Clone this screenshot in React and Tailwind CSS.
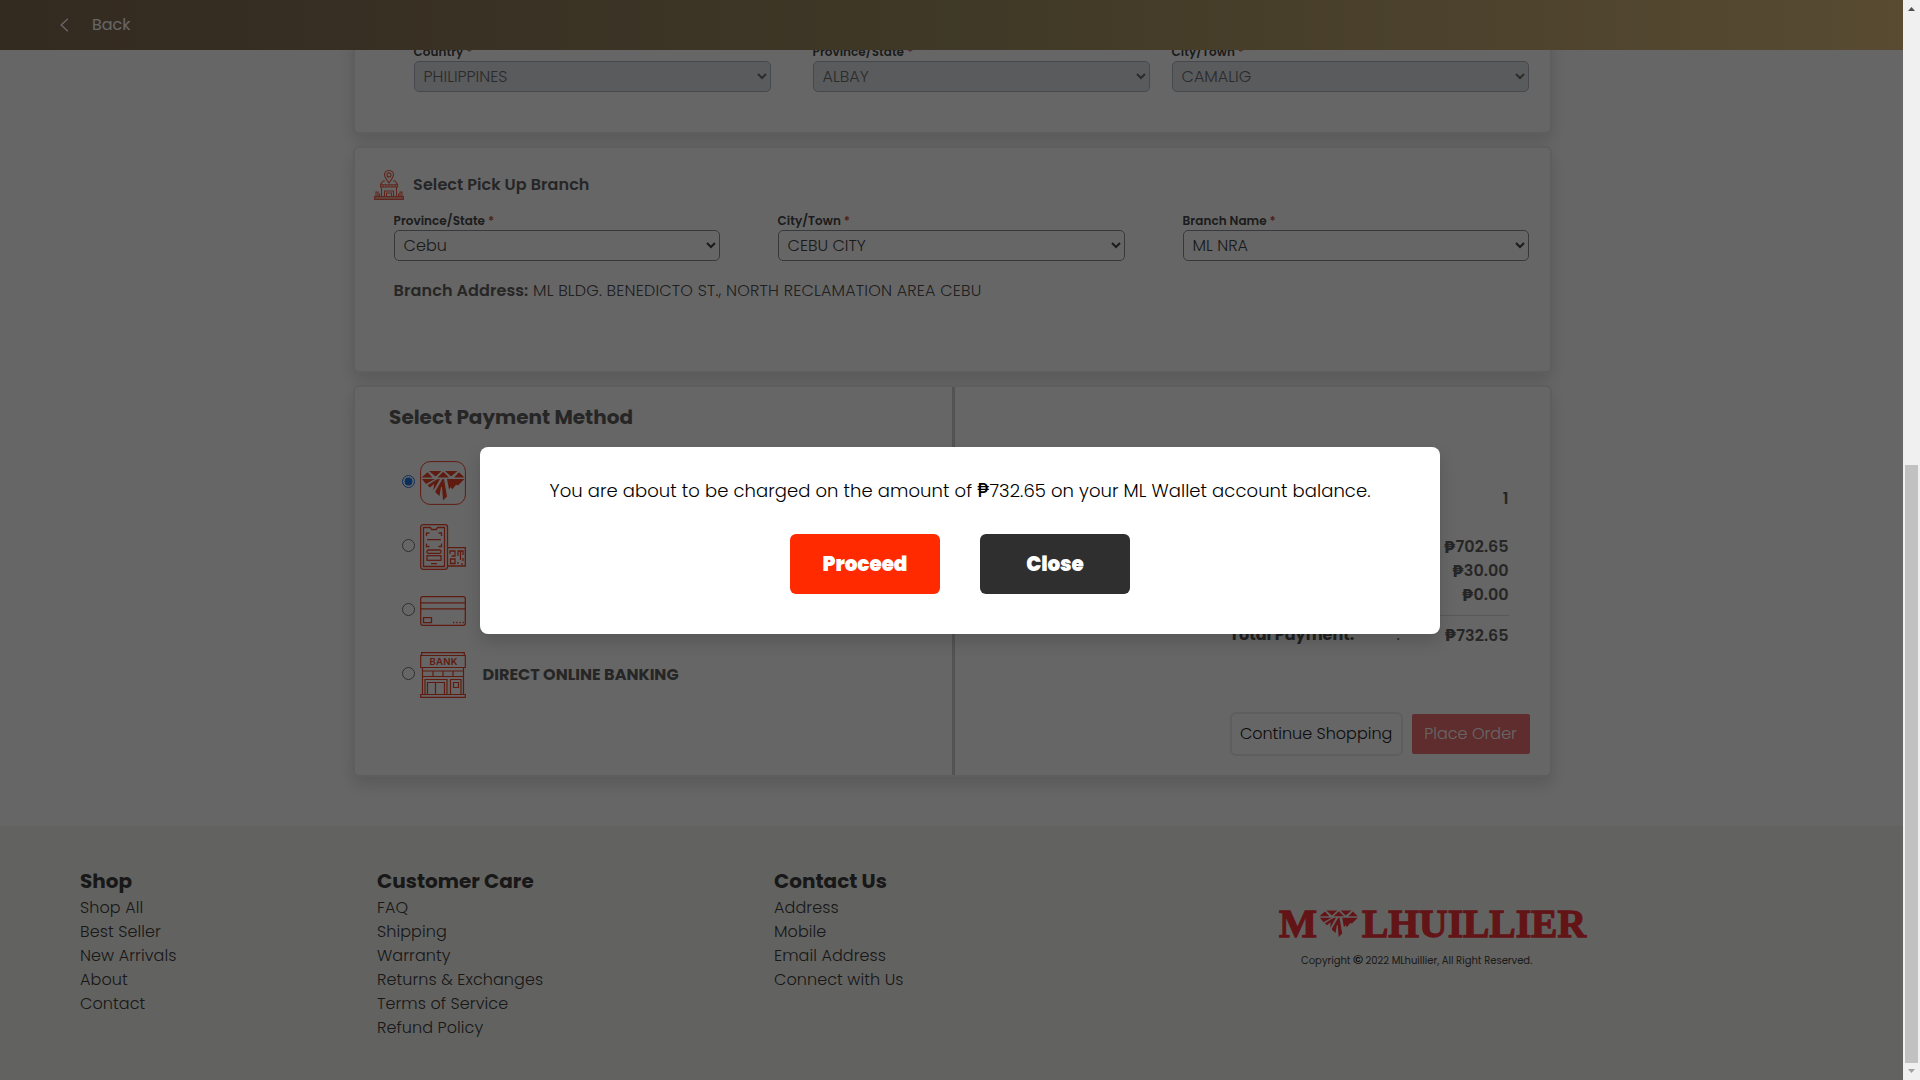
import React from "react";

const Peso = ({ bold }) => (
  <span className={bold ? "font-[Inter] font-extrabold" : "font-[Inter] font-medium"}>₱</span>
);

function Select({ value, disabled, className }) {
  return (
    <select
      disabled={disabled}
      defaultValue={value}
      className={
        "block h-[31px] rounded-[5px] border pr-[6px] pl-[5px] text-base leading-6 font-light " +
        (disabled ? "border-[#adb5bd] bg-[#dfe3e7] text-[#6d6d6d] " : "border-[#8a9097] bg-white text-[#444] ") +
        className
      }
    >
      <option>{value}</option>
    </select>
  );
}

function Field({ label, value, disabled, width }) {
  return (
    <div className={width}>
      <div className="h-[18px] text-xs leading-[18px] font-semibold tracking-[0.04px] text-[#484848]">
        {label} <span className="text-[#b85050]">*</span>
      </div>
      <Select value={value} disabled={disabled} className="w-full" />
    </div>
  );
}

const CARD = "rounded-md border-2 border-[#ebebeb] bg-white shadow-[0_8px_16px_rgba(0,0,0,0.13)]";

const Gem = () => (
  <>
    <path d="M7.500 0H20L14 5.500ZM23.500 0H36L29.500 5.500ZM0 6.500 6 1.200 11 6.500ZM16 6.500 21.700.8 27.500 6.500ZM32.500 6.500 37.500 1.200 43 6.500Z" />
    <path d="M.5 8H13.500L4.500 13Z" />
    <path d="M15.500 8.300 6 14.200 8.500 16.500 12.500 13 12 19.500 18.500 8Z" />
    <path d="M21 8 14 20 14 21.500 18 25 19.500 16 20.500 16 21.500 29.500 25.500 25.500 22.500 8Z" />
    <path d="M25.500 8H43L36.500 14.500 34.500 13.800 31 18.300 29 16.300 27.500 18.500Z" />
  </>
);

const WalletIcon = () => (
  <svg width="46" height="44" viewBox="0 0 46 44" fill="none" className="text-[#f0452a]">
    <rect x=".6" y=".6" width="44.800" height="42.800" rx="9.500" stroke="currentColor" />
    <g fill="currentColor" transform="translate(1.500 10)">
      <Gem />
    </g>
  </svg>
);

const QrIcon = () => (
  <svg width="46" height="46" viewBox="0 0 46 46" fill="none" stroke="#f0452a" strokeWidth="1.300">
    <rect x=".7" y=".7" width="26.800" height="44.600" rx="2.500" />
    <path d="M3.500 3.500H10.500L11.500 5.500H16.500L17.500 3.500H24.500V42.500H3.500Z" />
    <path d="M6.500 12V9H9.500M18.500 9H21.500V12M6.500 19.500V22.500H9.500M18.500 22.500H21.500V19.500M7 15.700H21M11 39.700H17" />
    <rect x="7" y="26" width="14" height="3.400" rx="1.500" />
    <rect x="7" y="31.700" width="14" height="4.600" />
    <path d="M27.500 23.700H45.300V42H27.500M30 30V27H35V32H31.500M38 32V27H43V31M40.500 27V36M43 34V37M30.500 35H35V39.500H30.500ZM38 38V40M42 39V41" />
  </svg>
);

const CardIcon = () => (
  <svg width="46" height="30" viewBox="0 0 46 30" fill="none" stroke="#f0452a" strokeWidth="1.300">
    <rect x=".7" y=".7" width="44.600" height="28.600" rx="2" />
    <path d="M.7 6.800H45.300M.7 12.800H45.300M3.500 21.700H11.500V26.700H3.500Z" />
    <path d="M33 26.500H44" strokeDasharray="1.400 1.800" strokeWidth="1.600" />
  </svg>
);

const BankIcon = () => (
  <svg width="46" height="46" viewBox="0 0 46 46" fill="none" stroke="#f0452a" strokeWidth="1.200">
    <path d="M1.700 3.500V.7H44.300V3.500M.7 3.500H45.300V15.500H.7ZM.7 42.500H45.300V45.300H.7ZM2.500 15.500V42.500M43.500 15.500V42.500M3 19H43M3 24.500H43M13 19V24.500M23 19V24.500M33 19V24.500" />
    <path d="M5 42.500V27.500H27V42.500M7.500 42.500V30.500H24.500V42.500M15.500 30.500V42.500M30.500 42.500V27.500H41V42.500M33.500 30.500H38.500V35.500H33.500Z" />
    <text x="9.500" y="13" fontFamily="Inter, sans-serif" fontWeight="600" fontSize="9.500" textLength="28" lengthAdjust="spacing" fill="#f0452a" stroke="none">BANK</text>
  </svg>
);

const BranchIcon = () => (
  <svg width="30" height="30" viewBox="0 0 30 30" fill="none" stroke="#f0604a" strokeWidth="1.100">
    <path d="M15 13C12 8.500 10.500 7 10.500 4.800A4.500 4.300 0 0 1 19.500 4.800C19.500 7 18 8.500 15 13Z" />
    <circle cx="15" cy="4.900" r="2" />
    <path d="M11 11H9L6.500 14.500V17H23.500V14.500L21 11H19M6.500 14.800H23.500M9 15V17M12 15V17M15 15V17M18 15V17M21 15V17M7.500 17V26M22.500 17V26M10.500 26V21H19.500V26M12.500 26V23H17.500V26M4 26V22H2V26M26 26V22H28V26M5.500 26V23.500M24.500 26V23.500" />
    <path d="M.6 26.500H29.400V29.400H.6Z" fill="#f0604a" fillOpacity=".5" />
  </svg>
);

function Method({ icon, label, checked }) {
  return (
    <div className="flex h-16 items-center">
      <input type="radio" name="method" defaultChecked={checked} className="mr-[5px] mb-1 size-[13px] accent-[#1a73e8]" />
      {icon}
      <span className="ml-[17px] font-bold text-[#606060]">{label}</span>
    </div>
  );
}

const LINKS = [
  ["w-[297px]", "Shop", ["Shop All", "Best Seller", "New Arrivals", "About", "Contact"]],
  ["w-[397px]", "Customer Care", ["FAQ", "Shipping", "Warranty", "Returns & Exchanges", "Terms of Service", "Refund Policy"]],
  ["w-[504px]", "Contact Us", ["Address", "Mobile", "Email Address", "Connect with Us"]],
];

function Logo() {
  return (
    <svg width="310" height="32" viewBox="0 0 310 32" fill="#f8333a" stroke="#f8333a" className="overflow-visible">
      <text x="1" y="28.500" fontFamily="'Liberation Serif', serif" fontWeight="700" fontSize="41" strokeWidth="1.300" textLength="38" lengthAdjust="spacingAndGlyphs">M</text>
      <g transform="translate(41.500 2.500) scale(.89 .9)" stroke="none">
        <Gem />
      </g>
      <text x="84" y="28.500" fontFamily="'Liberation Serif', serif" fontWeight="700" fontSize="41" strokeWidth="1.300" textLength="224" lengthAdjust="spacingAndGlyphs">LHUILLIER</text>
    </svg>
  );
}

function Footer() {
  return (
    <footer className="flex h-[254px] bg-[#f5f5f0] pt-10 pl-20 text-[#3c3c3c]">
      {LINKS.map(([width, title, items]) => (
        <div key={title} className={width}>
          <h3 className="text-xl leading-[30px] font-bold">{title}</h3>
          <ul className="leading-6 font-light tracking-[0.08px]">
            {items.map((item) => (
              <li key={item}>{item}</li>
            ))}
          </ul>
        </div>
      ))}
      <div className="pt-[42px]">
        <Logo />
        <p className="mt-[13px] ml-[23px] text-[10px] leading-[15px] font-normal text-[#444]">
          Copyright <span className="font-['Liberation_Sans'] text-[13px] leading-3 font-bold text-black">©</span> 2022 MLhuillier, All Right Reserved.
        </p>
      </div>
    </footer>
  );
}

function Summary() {
  const row = "flex h-6 justify-end";
  return (
    <section className="flex flex-1 flex-col pr-[41px] pl-[275px]">
      <div className="mt-[100px] leading-6 font-semibold text-[#606060]">
        <div className={row}>1</div>
        <div className="mt-6">
          <div className={row}><Peso bold />702.65</div>
          <div className={row}><Peso bold />30.00</div>
          <div className={row}><Peso bold />0.00</div>
        </div>
        <div className="mt-2 mb-[7px] h-px bg-[#dcdcdc]" />
        <div className="flex h-6">
          <span className="w-[167px] font-bold text-[#505050]">Total Payment:</span>
          <span className="font-normal">:</span>
          <span className="ml-auto"><Peso bold />732.65</span>
        </div>
      </div>
      <div className="mt-[65px] -mr-[21px] flex items-center justify-between">
        <button className="h-11 w-[173px] rounded-md border-2 border-[#ebebeb] font-light text-[#222]">Continue Shopping</button>
        <button className="h-10 w-[118px] rounded-[2px] bg-[#ed7070] font-light text-white">Place Order</button>
      </div>
    </section>
  );
}

export default function App() {
  return (
    <div className="flex h-[1080px] w-[1920px] overflow-hidden bg-white font-[Poppins,sans-serif] text-base">
      <div className="relative flex w-[1903px] flex-col">
        <header className="z-10 flex h-[50px] shrink-0 items-center bg-linear-to-r from-[#806952] via-[#9f8e61] to-[#dcbb7d] pl-[60px] text-white">
          <svg width="9" height="14" viewBox="0 0 9 14" fill="none" stroke="currentColor" strokeWidth="1.400">
            <path d="M7.800.7 1.200 7 7.800 13.300" />
          </svg>
          <span className="ml-[23px]">Back</span>
        </header>

        <main className="ml-[352.600px] -mt-5 flex w-[1199px] flex-col gap-3">
          <section className={CARD + " flex h-[104px] pt-[11px] pl-[59px]"}>
            <Field disabled label="Country" value="PHILIPPINES" width="mr-[42px] w-[357px]" />
            <Field disabled label="Province/State" value="ALBAY" width="mr-[22px] w-[337px]" />
            <Field disabled label="City/Town" value="CAMALIG" width="w-[357px]" />
          </section>

          <section className={CARD + " h-[227px]"}>
            <div className="mt-[22px] ml-[19px] flex h-[30px] items-center gap-[9.500px]">
              <BranchIcon />
              <h2 className="font-semibold tracking-[0.08px] text-[#606060]">Select Pick Up Branch</h2>
            </div>
            <div className="mt-[12px] ml-[39px] flex">
              <Field label="Province/State" value="Cebu" width="mr-[58px] w-[326px]" />
              <Field label="City/Town" value="CEBU CITY" width="mr-[58px] w-[347px]" />
              <Field label="Branch Name" value="ML NRA" width="w-[346px]" />
            </div>
            <p className="mt-[18px] ml-[39px] leading-6 font-light tracking-[0.18px] text-[#505050]">
              <b className="font-semibold tracking-[0.1px] text-[#606060]">Branch Address:</b> ML BLDG. BENEDICTO ST., NORTH RECLAMATION AREA CEBU
            </p>
          </section>

          <section className={CARD + " flex h-[392px]"}>
            <div className="w-[600px] border-r-[3px] border-[#cfcfcf]">
              <h2 className="mt-[15px] ml-[34.500px] text-xl leading-[30px] font-bold text-[#606060]">Select Payment Method</h2>
              <div className="mt-[19px] ml-[47px]">
                <Method icon={<WalletIcon />} checked />
                <Method icon={<QrIcon />} />
                <Method icon={<CardIcon />} />
                <Method icon={<BankIcon />} label="DIRECT ONLINE BANKING" />
              </div>
            </div>
            <Summary />
          </section>
        </main>

        <div className="mt-[49px]">
          <Footer />
        </div>

        <div className="absolute inset-0 z-20 bg-black/60 pt-[447px] pl-[480px]">
          <div className="flex h-[187px] w-[960px] flex-col items-center rounded-lg bg-white pt-[30px] shadow-[0_8px_16px_rgba(0,0,0,0.15)]">
            <p className="text-lg leading-[27px] font-light tracking-[0.07px] text-black">
              You are about to be charged on the amount of <Peso />732.65 on your ML Wallet account balance.
            </p>
            <div className="mt-[30px] flex gap-10 text-xl font-black tracking-[-0.1px] text-white">
              <button className="h-[60px] w-[150px] rounded-md bg-[#ff2a00]">Proceed</button>
              <button className="h-[60px] w-[150px] rounded-md bg-[#2f2f2f]">Close</button>
            </div>
          </div>
        </div>
      </div>

      <div className="flex w-[17px] flex-col items-center bg-[#f0f0f0]">
        <svg width="7" height="4" viewBox="0 0 7 4" className="mt-[7px]"><path d="M0 4 3.500 0 7 4Z" fill="#505050" /></svg>
        <div className="mt-[454px] h-[598px] w-[13px] bg-[#c1c1c1]" />
        <svg width="7" height="4" viewBox="0 0 7 4" className="mt-[6px]"><path d="M0 0 3.500 4 7 0Z" fill="#a0a0a0" /></svg>
      </div>
    </div>
  );
}
